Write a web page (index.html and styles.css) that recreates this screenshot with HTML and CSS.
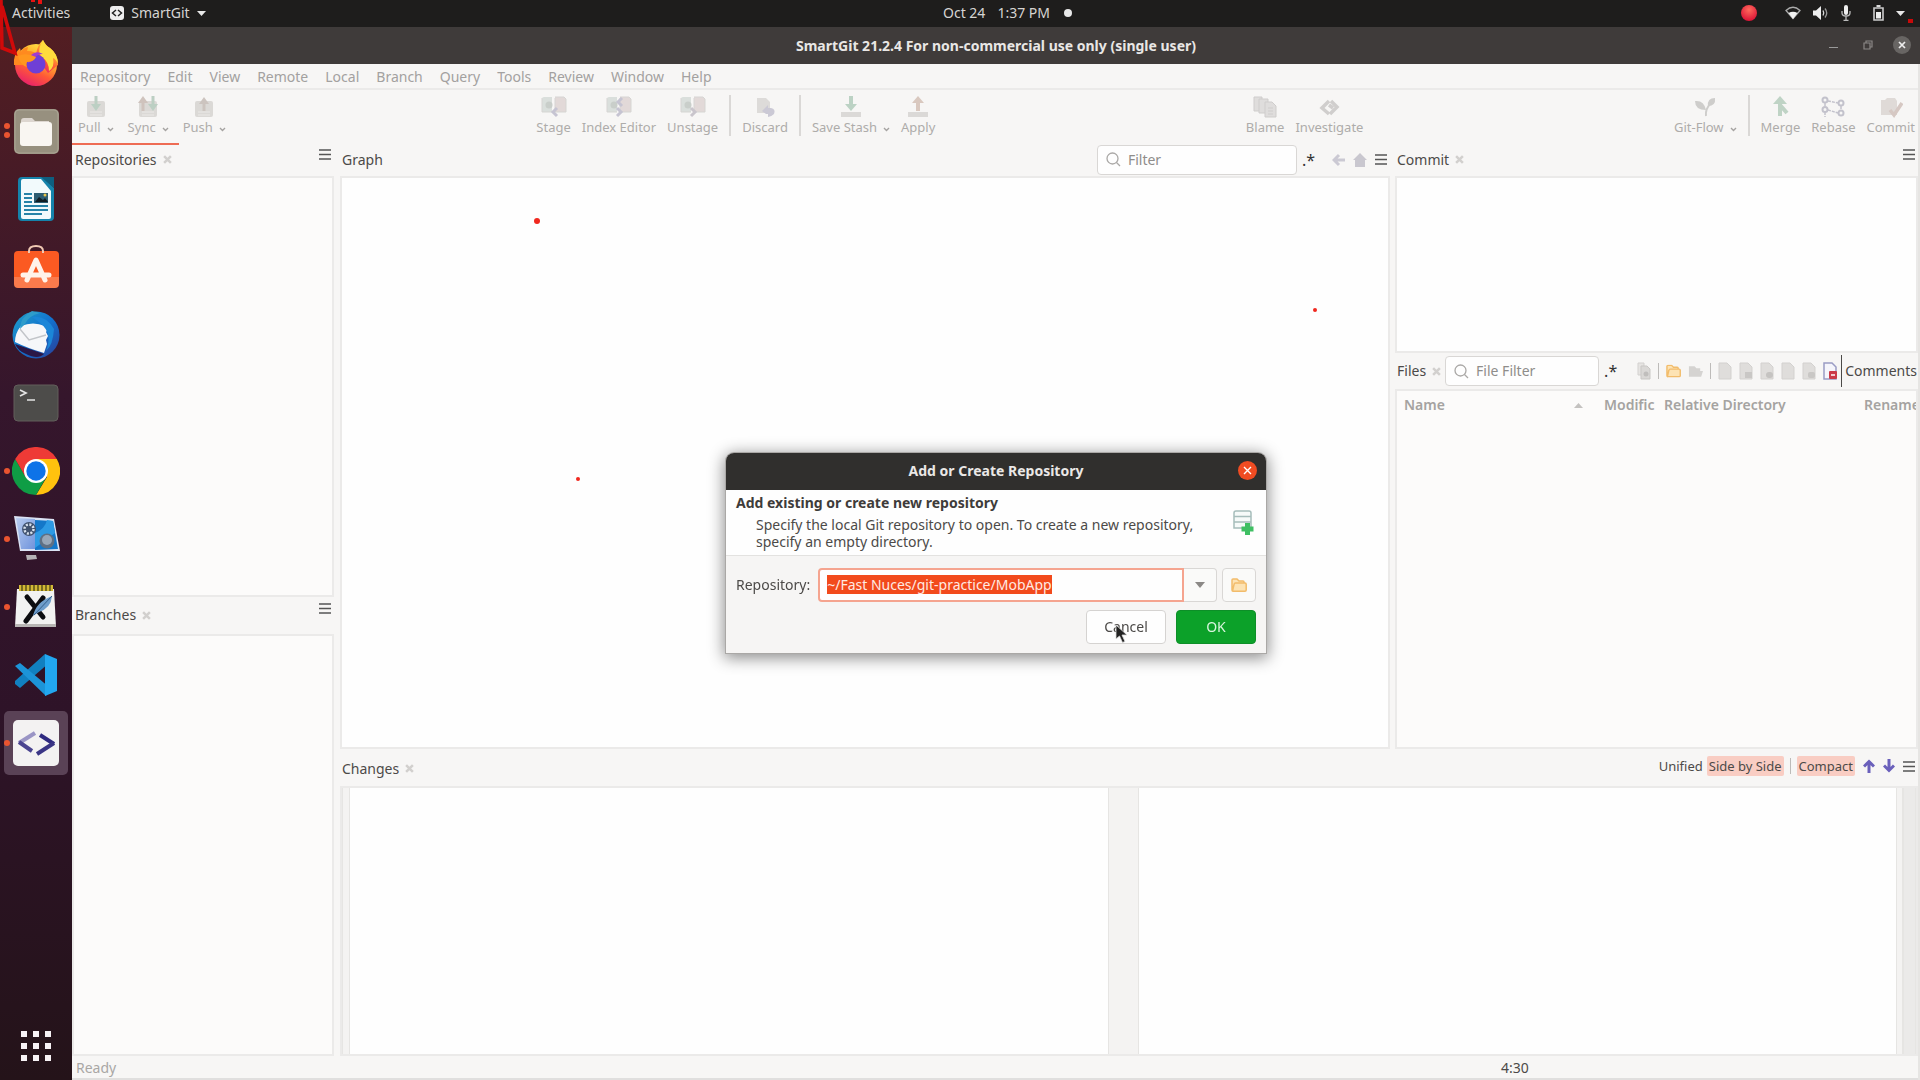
FILE: index.html
```html
<!DOCTYPE html>
<html lang="en">
<head>
<meta charset="utf-8">
<title>SmartGit</title>
<link rel="stylesheet" href="styles.css">
</head>
<body>
<svg class="defs" aria-hidden="true">
  <defs>
    <linearGradient id="ff" x1="0.8" y1="0" x2="0.3" y2="1"><stop offset="0" stop-color="#fff04a"/><stop offset=".35" stop-color="#ffb02e"/><stop offset=".65" stop-color="#ff5a36"/><stop offset="1" stop-color="#e81f6c"/></linearGradient>
    <linearGradient id="tb" x1="0" y1="0" x2="1" y2="1"><stop offset="0" stop-color="#1fa0c8"/><stop offset=".5" stop-color="#1272cf"/><stop offset="1" stop-color="#2c3b94"/></linearGradient>
    <linearGradient id="sw" x1="0" y1="0" x2="0" y2="1"><stop offset="0" stop-color="#fb5a22"/><stop offset=".7" stop-color="#fb5a22"/><stop offset=".71" stop-color="#fa7a4c"/><stop offset="1" stop-color="#fa7a4c"/></linearGradient>
    <linearGradient id="mon" x1="0" y1="0" x2="1" y2="1"><stop offset="0" stop-color="#b9cdf0"/><stop offset="1" stop-color="#6f93dc"/></linearGradient>
    <radialGradient id="rec" cx=".5" cy=".3" r=".7"><stop offset="0" stop-color="#ff6a5c"/><stop offset="1" stop-color="#dc1236"/></radialGradient>
    <symbol id="burger" viewBox="0 0 12 11"><path d="M0 1h12M0 5.5h12M0 10h12" stroke="#555" stroke-width="1.5"/></symbol>
    <symbol id="close" viewBox="0 0 8 8"><path d="M1 1l6 6M7 1L1 7" stroke="#d2d0ce" stroke-width="2.2"/></symbol>
    <symbol id="caret" viewBox="0 0 7 5"><path d="M1 1l2.500 2.500L6 1" fill="none" stroke="#a5a3a1" stroke-width="1.400"/></symbol>
    <symbol id="lens" viewBox="0 0 15 15"><circle cx="6.500" cy="6.500" r="5.500" fill="none" stroke="#aaa8a6" stroke-width="1.300"/><path d="M10.500 10.500L14 14" stroke="#aaa8a6" stroke-width="1.300"/></symbol>
    <symbol id="tray" viewBox="0 0 24 22"><path d="M3 7q0-2 2-2h14q2 0 2 2v12q0 2-2 2H5q-2 0-2-2z" fill="#dbd9d6"/><path d="M6 16h12M6 19h12" stroke="#ebe9e7"/></symbol>
    <symbol id="page" viewBox="0 0 14 18"><path d="M1 1h8l4 4v12H1z" fill="#dfdddb" stroke="#d3d1cf"/></symbol>
    <symbol id="folder" viewBox="0 0 16 14"><path d="M1 12V2q0-1 1-1h4l2 2h4q1 0 1 1v1M1.500 13L3 6.500q.3-1.500 1.500-1.500H14q1.200 0 1.200 1.200V12q0 1.200-1.200 1.200H2Q1 13.200 1 12z" fill="#fde3b4" stroke="#f2bc6b" stroke-width="1.500"/></symbol>
    <symbol id="pair" viewBox="0 0 26 22"><path d="M1 3q0-2 2-2h8v15H1z" fill="#dadfdc"/><path d="M14 1h9l2 2v13H14z" fill="#e2d9d8"/><path d="M1 2v14h10M14 2v14h11V3l-2-2h-9" fill="none" stroke="#d6d5d3"/><circle cx="8" cy="9" r="3.500" fill="#c9ceca"/></symbol>
  </defs>
</svg>

<header class="topbar">
  <div class="topbar-left">
    <button class="plain">Activities</button>
    <button class="plain app-menu"><svg width="14" height="14" viewBox="0 0 14 14"><rect width="14" height="14" rx="3" fill="#eee"/><path d="M6 4L2.500 7 6 10M8 4l3.500 3L8 10" fill="none" stroke="#222" stroke-width="1.500"/></svg>SmartGit<svg width="9" height="5" viewBox="0 0 9 5"><path d="M0 0h9L4.500 5z" fill="#e8e8e8"/></svg></button>
  </div>
  <button class="plain clock"><span>Oct 24</span><span>1:37 PM</span><i class="dot"></i></button>
  <div class="topbar-right">
    <svg class="rec" width="16" height="16"><circle cx="8" cy="8" r="8" fill="url(#rec)"/></svg>
    <svg width="16" height="14" viewBox="0 0 16 14"><path d="M1 4.500Q8-2 15 4.500L8 12.500z" fill="none" stroke="#aaa" stroke-width="1.300"/><path d="M3.500 7Q8 4.500 12.500 7L8 13z" fill="#f2f2f2"/></svg>
    <svg width="16" height="14" viewBox="0 0 16 14"><path d="M0 4.500h3L8 0v14L3 9.500H0z" fill="#eee"/><path d="M10 4.500q1.500 2.500 0 5" fill="none" stroke="#ddd" stroke-width="1.300"/><path d="M12 2.500q3.500 4.500 0 9" fill="none" stroke="#999" stroke-width="1.300"/></svg>
    <svg width="10" height="16" viewBox="0 0 10 16"><rect x="3" width="4" height="10" rx="2" fill="#eee"/><path d="M1 6v2q0 3 4 3t4-3V6M5 11v4M2.500 15.300h5" fill="none" stroke="#bbb" stroke-width="1.300"/></svg>
    <svg class="battery" width="11" height="16" viewBox="0 0 11 16"><path d="M1 3h9v12H1z" fill="none" stroke="#ccc" stroke-width="1.600"/><path d="M3.500 1h4" stroke="#ddd" stroke-width="2"/><path d="M3 7h5v6.500H3z" fill="#eee"/></svg>
    <svg width="9" height="5" viewBox="0 0 9 5"><path d="M0 0h9L4.500 5z" fill="#e8e8e8"/></svg>
  </div>
</header>

<div class="desktop">
  <nav class="dock" aria-label="Dock">
    <button class="dock-item" aria-label="Firefox"><svg viewBox="0 0 48 48"><circle cx="24" cy="26" r="21" fill="url(#ff)"/><path d="M24 16Q25 6 31 1q2 5 7 8 8 6 8 17L36 34 26 20z" fill="url(#ff)"/><path d="M31 1q2 5 7 8 8 6 8 16-2-5-5-6 2 9-4 13 0-9-7-14-6-5 1-17z" fill="#ffdc3d"/><path d="M2 26Q1 15 8 9l1 4q2-4 7-5l-1 4q9 0 10 5l-7 9z" fill="#ff8a1f"/><circle cx="24" cy="25" r="9.500" fill="#6f3fd6"/><path d="M16 20q6-10 15-5-7 0-8 5l-7 4z" fill="#a03bd0"/><path d="M6 17q8-4 18 1-2 5-9 5-2 2 0 5Q8 26 6 17z" fill="#ff971f"/></svg></button>
    <button class="dock-item two" aria-label="Files"><svg viewBox="0 0 48 48"><rect x="2" y="2" width="45" height="45" rx="5" fill="#97907f"/><rect x="3" y="3" width="43" height="43" rx="4" fill="none" stroke="#aaa494"/><path d="M9 14q0-3 3-3h8l3 3h14v8H9z" fill="#ddd6d0"/><rect x="8" y="15" width="32" height="24" rx="3" fill="#f9f6f2"/></svg></button>
    <button class="dock-item" aria-label="Writer"><svg viewBox="0 0 48 48"><path d="M10 2h21l11 11v29q0 4-4 4H10q-4 0-4-4V6q0-4 4-4z" fill="#1583ab"/><path d="M11 4h18l10 12v26q0 2-2 2H11q-2 0-2-2V6q0-2 2-2z" fill="#f2fafc"/><path d="M29 2h13v11z" fill="#0e5f80"/><path d="M12 19h8M12 23h8M12 27h8M12 31h24M12 35h24M12 39h18" stroke="#2683a8" stroke-width="2"/><path d="M22 18h14v10H22z" fill="#2d5d72"/><path d="M23 27l4-5 4 3 2-2 3 4z" fill="#111e24"/><circle cx="33" cy="20" r="1.500" fill="#e8c44a"/></svg></button>
    <button class="dock-item" aria-label="Software"><svg viewBox="0 0 48 48"><rect x="2" y="8" width="45" height="37" rx="4" fill="url(#sw)"/><path d="M17 10V8q0-5 7-5t7 5v2" fill="none" stroke="#f0c9b3" stroke-width="2"/><path d="M15 37l9-20 9 20M11 32h26" fill="none" stroke="#fff3ea" stroke-width="5" stroke-linejoin="round" stroke-linecap="round"/></svg></button>
    <button class="dock-item" aria-label="Thunderbird"><svg viewBox="0 0 48 48"><circle cx="24" cy="24" r="23.500" fill="url(#tb)"/><path d="M3 33l29 10Q26 49 14 43 6 40 3 33z" fill="#2b1746"/><path d="M9 15q12-5 24 0l3 3-2 3 2 4-2 4 1 4-3 9Q15 37 3 31q0-9 6-16z" fill="#f6f7f9"/><path d="M8 18l9 11 17-5" fill="none" stroke="#c2c5c9" stroke-width="1.500"/><path d="M8 18Q8 6 20 0l8 2Q16 5 13 13z" fill="#2e9ccb"/><path d="M20 6q14-2 22 12-1 16-8 22 7-18-6-28z" fill="#1b86d8"/></svg></button>
    <button class="dock-item" aria-label="Terminal"><svg viewBox="0 0 48 48"><rect x="2" y="6" width="44" height="36" rx="4" fill="#4d4c4a" stroke="#625e5b"/><path d="M8 11l6 3-6 3M15 21h8" fill="none" stroke="#e4e4e4" stroke-width="1.700"/></svg></button>
    <button class="dock-item one" aria-label="Chrome"><svg viewBox="0 0 48 48"><path d="M24 12h20.800A24 24 0 0 1 24 48l11-18z" fill="#ffc20e"/><path d="M3.200 12A24 24 0 0 0 24 48l10.400-18H24L13.600 30z" fill="#0f9d45"/><path d="M3.200 12A24 24 0 0 1 44.800 12H24L13.600 30z" fill="#ee3a36"/><circle cx="24" cy="24" r="12" fill="#fff"/><circle cx="24" cy="24" r="9.700" fill="#0d73e8"/></svg></button>
    <button class="dock-item one" aria-label="Screen recorder"><svg viewBox="0 0 48 48"><path d="M2 1l40 3 6 32H8z" fill="#dbe3f4"/><path d="M4 3l19 1v30H9z" fill="url(#mon)"/><path d="M23 5l18 1 5 28-23 1z" fill="#1477c9"/><path d="M23 18q10-4 12-13l6 1 2 12-20 15z" fill="#2d9ae4"/><circle cx="17" cy="14" r="7" fill="#41526e"/><circle cx="17" cy="14" r="4.500" fill="none" stroke="#d9e2ee" stroke-width="2.500" stroke-dasharray="2 1.500"/><circle cx="35" cy="26" r="7.500" fill="#5f7084"/><circle cx="35" cy="25" r="5" fill="#98a7b8"/><path d="M14 40h10l1 4-10 1z" fill="#b5b3b6"/></svg></button>
    <button class="dock-item one" aria-label="Xournal++"><svg viewBox="0 0 48 48"><path d="M5 6h37l2 38H3z" fill="#f2f2f1"/><path d="M3 41h41v3H3z" fill="#b8b6b4"/><path d="M7 2h34v6H7z" fill="#776c20"/><path d="M7 5h34" stroke="#d3b936" stroke-width="6" stroke-dasharray="2 2"/><path d="M15 14l16 20M31 15L14 38" stroke="#0c0d10" stroke-width="5" stroke-linecap="round"/><path d="M40 13q-1 12-13 16l-6 4Q24 19 40 13z" fill="#6f9ecb"/><path d="M40 13L22 32" stroke="#35608c"/></svg></button>
    <button class="dock-item" aria-label="Visual Studio Code"><svg viewBox="0 0 48 48"><path d="M33 3l4 9L8 37l-5-4v-3z" fill="#1180c0"/><path d="M3 15l5-3 29 24-3 9z" fill="#1c94d8"/><path d="M33 3l12 5v32l-12 5z" fill="#22a7f0"/></svg></button>
    <button class="dock-item one active" aria-label="SmartGit"><svg viewBox="0 0 48 48"><rect x="1" y="1" width="46" height="46" rx="5" fill="#f3f2f2"/><path d="M23 14L7 24" stroke="#9a95c5" stroke-width="4"/><path d="M7 23l13 9" stroke="#4a4490" stroke-width="4"/><path d="M28 16l14 9" stroke="#2f2a80" stroke-width="4"/><path d="M42 24L25 35" stroke="#3a3585" stroke-width="4"/></svg></button>
    <button class="dock-item apps" aria-label="Show Applications"><svg viewBox="0 0 48 48"><path d="M9 12h30M9 24h30M9 36h30" stroke="#f7f2f5" stroke-width="6" stroke-dasharray="6 6"/></svg></button>
  </nav>

  <main class="window">
    <div class="titlebar">
      <h1>SmartGit 21.2.4 For non-commercial use only (single user)</h1>
      <div class="win-buttons">
        <button class="plain" aria-label="Minimize"><svg width="9" height="8"><path d="M0 6.500h9" stroke="#999"/></svg></button>
        <button class="plain" aria-label="Restore"><svg width="10" height="10" viewBox="0 0 10 10"><path d="M1 3h6v6H1zM3 3V1h6v6H7" fill="none" stroke="#8a8785" stroke-width="1.200"/></svg></button>
        <button class="plain win-close" aria-label="Close"><svg width="8" height="8" viewBox="0 0 8 8"><path d="M1 1l6 6M7 1L1 7" stroke="#eee" stroke-width="1.700"/></svg></button>
      </div>
    </div>
    <nav class="menubar">
      <button class="plain">Repository</button><button class="plain">Edit</button><button class="plain">View</button><button class="plain">Remote</button><button class="plain">Local</button><button class="plain">Branch</button><button class="plain">Query</button><button class="plain">Tools</button><button class="plain">Review</button><button class="plain">Window</button><button class="plain">Help</button>
    </nav>
    <div class="toolbar">
      <div class="tools first">
        <button class="tool drop"><svg class="ti" viewBox="0 0 24 22"><use href="#tray"/><path d="M12 0v9" stroke="#bccfc3" stroke-width="3"/><path d="M7 8h10l-5 7z" fill="#bccfc3"/></svg><span>Pull<svg class="caret"><use href="#caret"/></svg></span></button>
        <button class="tool drop"><svg class="ti" viewBox="0 0 24 22"><use href="#tray"/><path d="M7 15V5" stroke="#cfc3bd" stroke-width="3"/><path d="M2 7h10L7 0z" fill="#cfc3bd"/><path d="M17 0v9" stroke="#bccfc3" stroke-width="3"/><path d="M12 8h10l-5 7z" fill="#bccfc3"/></svg><span>Sync<svg class="caret"><use href="#caret"/></svg></span></button>
        <button class="tool drop"><svg class="ti" viewBox="0 0 24 22"><use href="#tray"/><path d="M12 15V6" stroke="#ccc4bf" stroke-width="3"/><path d="M7 8h10l-5-7z" fill="#ccc4bf"/></svg><span>Push<svg class="caret"><use href="#caret"/></svg></span></button>
      </div>
      <div class="tools">
        <button class="tool"><svg class="ti wide" viewBox="0 0 26 22"><use href="#pair"/><path d="M16 12l-4 4 4 4" fill="none" stroke="#c6c4d2" stroke-width="3"/></svg>Stage</button>
        <button class="tool"><svg class="ti wide" viewBox="0 0 26 22"><use href="#pair"/><path d="M16 2l-4 4 4 4M11 12l4 4-4 4" fill="none" stroke="#c6c4d2" stroke-width="3"/></svg>Index Editor</button>
        <button class="tool"><svg class="ti wide" viewBox="0 0 26 22"><use href="#pair"/><path d="M11 12l4 4-4 4" fill="none" stroke="#c9c5cc" stroke-width="3"/></svg>Unstage</button>
        <i class="sep"></i>
        <button class="tool"><svg class="ti" viewBox="0 0 24 22"><path d="M4 2h9l4 4v11H4z" fill="#dddbd9"/><path d="M9 15l6-6v3h3q5 1 3 6-3 3-6 3v-3h-2z" fill="#cbc9d5"/></svg>Discard</button>
        <i class="sep"></i>
        <button class="tool drop"><svg class="ti" viewBox="0 0 24 22"><path d="M12 0v8" stroke="#bcd2c4" stroke-width="4"/><path d="M6 8h12l-6 7z" fill="#bcd2c4"/><path d="M2 18.500h20" stroke="#dbd9d7" stroke-width="5"/></svg><span>Save Stash<svg class="caret"><use href="#caret"/></svg></span></button>
        <button class="tool"><svg class="ti" viewBox="0 0 24 22"><path d="M12 15V6" stroke="#d9c8bf" stroke-width="4"/><path d="M6 7h12l-6-7z" fill="#d9c8bf"/><path d="M2 18.500h20" stroke="#dbd9d7" stroke-width="5"/></svg>Apply</button>
      </div>
      <div class="tools">
        <button class="tool"><svg class="ti" viewBox="0 0 24 22"><g fill="#dfdddc" stroke="#cfcdcc"><path d="M1 1h8v14H1z"/><path d="M6 3h9v14H6z"/><path d="M12 6h7l4 4v11H12z"/></g><path d="M15 12h5M15 15h5M15 18h5" stroke="#cfcdcc"/></svg>Blame</button>
        <button class="tool"><svg class="ti" viewBox="0 0 24 22"><path d="M12 5l-7 7 7 6M14 5l6 6-7 7M12 9l4 3" fill="none" stroke="#d0cecd" stroke-width="3.500"/></svg>Investigate</button>
      </div>
      <div class="tools">
        <button class="tool drop"><svg class="ti" viewBox="0 0 24 22"><path d="M2 5q9-1 11 9Q2 14 2 5zM22 2q-8 0-7 8 8 0 7-8z" fill="#cecdcb"/><path d="M13 20q-1-7 5-13" fill="none" stroke="#cecdcb" stroke-width="2"/></svg><span>Git-Flow<svg class="caret"><use href="#caret"/></svg></span></button>
        <i class="sep"></i>
        <button class="tool"><svg class="ti" viewBox="0 0 24 22"><path d="M12 20V7M12 9l7 8" stroke="#bfd3c5" stroke-width="4"/><path d="M5 8h14l-7-8z" fill="#bfd3c5"/></svg>Merge</button>
        <button class="tool"><svg class="ti" viewBox="0 0 24 22"><path d="M4 7v4M4 16v5M20 10v4M7 5l10 2M7 14l10 3" stroke="#c3c2cc" stroke-width="1.500" stroke-dasharray="3 1"/><g fill="none" stroke="#c3c2cc" stroke-width="2"><circle cx="4" cy="4" r="2.500"/><circle cx="4" cy="13.500" r="2.500"/><circle cx="20" cy="7" r="2.500"/><circle cx="20" cy="17" r="2.500"/></g></svg>Rebase</button>
        <button class="tool"><svg class="ti" viewBox="0 0 24 22"><path d="M2 4h4l2-2h8l2 3v14H2z" fill="#dfdad7"/><path d="M11 14l4 5 8-12" fill="none" stroke="#d6c8c3" stroke-width="3.500"/></svg>Commit</button>
      </div>
    </div>

    <div class="workspace">
      <div class="side">
        <section class="view repositories">
          <header class="head focus"><h2>Repositories</h2><button class="plain" aria-label="Close Repositories"><svg class="x"><use href="#close"/></svg></button><button class="plain menu raised" aria-label="Repositories menu"><svg class="burger"><use href="#burger"/></svg></button></header>
          <div class="pane"></div>
        </section>
        <section class="view branches">
          <header class="head tall"><h2>Branches</h2><button class="plain" aria-label="Close Branches"><svg class="x"><use href="#close"/></svg></button><button class="plain menu raised" aria-label="Branches menu"><svg class="burger"><use href="#burger"/></svg></button></header>
          <div class="pane"></div>
        </section>
      </div>
      <div class="center">
        <div class="upper">
          <section class="view">
            <header class="head"><h2>Graph</h2>
              <label class="search"><svg class="lens"><use href="#lens"/></svg><input type="text" placeholder="Filter" aria-label="Filter"></label>
              <button class="plain regex" aria-label="Regular expression">.*</button>
              <button class="plain back" aria-label="Back"><svg width="14" height="14" viewBox="0 0 14 14"><path d="M7 2L2 7l5 5M2 7h11" fill="none" stroke="#cbc9d3" stroke-width="3"/></svg></button>
              <button class="plain home" aria-label="Home"><svg width="14" height="14" viewBox="0 0 14 14"><path d="M7 0l7 7h-2v7H2V7H0z" fill="#c9c7cf"/></svg></button>
              <button class="plain" aria-label="Graph menu"><svg class="burger"><use href="#burger"/></svg></button>
            </header>
            <div class="pane white"></div>
          </section>
          <div class="right">
            <section class="view commit">
              <header class="head"><h2>Commit</h2><button class="plain" aria-label="Close Commit"><svg class="x"><use href="#close"/></svg></button><button class="plain menu raised" aria-label="Commit menu"><svg class="burger"><use href="#burger"/></svg></button></header>
              <div class="pane white"></div>
            </section>
            <section class="view files">
              <header class="head tall"><h2>Files</h2><button class="plain" aria-label="Close Files"><svg class="x"><use href="#close"/></svg></button>
                <label class="search file"><svg class="lens"><use href="#lens"/></svg><input type="text" placeholder="File Filter" aria-label="File Filter"></label>
                <button class="plain regex" aria-label="Regular expression">.*</button>
                <div class="file-tools">
                  <svg class="fi" viewBox="0 0 14 18"><path d="M1 1h6v12H1z" fill="#e6e4e2" stroke="#d3d1cf"/><path d="M4 4h6l3 3v10H4z" fill="#dad8d6" stroke="#c9c7c5"/><circle cx="9" cy="12" r="2.500" fill="#c0bebc"/></svg>
                  <i class="thin"></i>
                  <svg class="fo" viewBox="0 0 16 14"><use href="#folder"/></svg>
                  <svg class="fo" viewBox="0 0 16 14"><path d="M1 13V2h6l2 2h4v3h3l-2 6z" fill="#d5d3d1"/></svg>
                  <i class="thin"></i>
                  <svg class="fi" viewBox="0 0 14 18"><use href="#page"/></svg>
                  <svg class="fi" viewBox="0 0 14 18"><use href="#page"/><rect x="6" y="10" width="7" height="6" fill="#c9c7c5"/></svg>
                  <svg class="fi" viewBox="0 0 14 18"><use href="#page"/><rect x="6" y="10" width="7" height="6" rx="3" fill="#c5c3c1"/></svg>
                  <svg class="fi" viewBox="0 0 14 18"><use href="#page"/></svg>
                  <svg class="fi" viewBox="0 0 14 18"><use href="#page"/><rect x="6" y="10" width="7" height="6" rx="2" fill="#c9c7c5"/></svg>
                  <svg class="fi" viewBox="0 0 14 18"><path d="M1 1h8l4 4v12H1z" fill="#f5f5fb" stroke="#9a9cc4" stroke-width="1.500"/><rect x="6" y="9" width="8" height="8" rx="1" fill="#cc3a48"/><path d="M8 13h4" stroke="#fff" stroke-width="1.500"/></svg>
                </div>
                <h2 class="comments">Comments</h2>
              </header>
              <div class="pane">
                <table class="file-table"><thead><tr><th class="c-name"><span>Name<svg width="9" height="5"><path d="M0 5h9L4.500 0z" fill="#c4c2c0"/></svg></span></th><th class="c-mod">Modific</th><th class="c-dir">Relative Directory</th><th>Rename</th></tr></thead></table>
              </div>
            </section>
          </div>
        </div>
        <section class="view lower">
          <header class="head tall"><h2>Changes</h2><button class="plain" aria-label="Close Changes"><svg class="x"><use href="#close"/></svg></button>
            <div class="diff-modes">
              <button class="plain">Unified</button><button class="plain on">Side by Side</button><i class="thin"></i><button class="plain on">Compact</button>
              <button class="plain arrow" aria-label="Previous change"><svg width="12" height="14" viewBox="0 0 12 14"><path d="M6 14V3M1 7.500l5-5 5 5" fill="none" stroke="#6a60bb" stroke-width="3"/></svg></button>
              <button class="plain arrow" aria-label="Next change"><svg width="12" height="14" viewBox="0 0 12 14"><path d="M6 0v11M1 6.500l5 5 5-5" fill="none" stroke="#6a60bb" stroke-width="3"/></svg></button>
              <button class="plain arrow" aria-label="Changes menu"><svg class="burger"><use href="#burger"/></svg></button>
            </div>
          </header>
          <div class="pane diff"><i></i><div class="code"></div><i></i><div class="code"></div><i></i><i class="scroll"></i></div>
        </section>
      </div>
    </div>
    <footer class="status"><span class="ready">Ready</span><span>4:30</span></footer>
  </main>
</div>

<div class="modal">
  <form class="dialog" role="dialog" aria-labelledby="dlg-title">
    <header class="dialog-title"><h2 id="dlg-title">Add or Create Repository</h2><button type="button" class="plain dialog-close" aria-label="Close"><svg width="9" height="9" viewBox="0 0 9 9"><path d="M1 1l7 7M8 1L1 8" stroke="#fff" stroke-width="1.400"/></svg></button></header>
    <div class="intro">
      <div class="intro-text"><h3>Add existing or create new repository</h3><p>Specify the local Git repository to open. To create a new repository, specify an empty directory.</p></div>
      <svg class="intro-icon" width="21" height="26" viewBox="0 0 21 26"><path d="M1 3q0-2 2-2h13q2 0 2 2v15H1z" fill="#f6faf9" stroke="#a6bdbb" stroke-width="1.500"/><path d="M1 6.500h17M1 12h17" stroke="#a6bdbb" stroke-width="1.700"/><path d="M14.500 13v12M8.500 19h12" stroke="#3fbf63" stroke-width="5"/></svg>
    </div>
    <div class="field">
      <label for="repo">Repository:</label>
      <div class="combo"><input id="repo" type="text" value="~/Fast Nuces/git-practice/MobApp" spellcheck="false"><button type="button" aria-label="Show history"><svg width="10" height="6"><path d="M0 0h10L5 6z" fill="#8b8987"/></svg></button></div>
      <button type="button" class="browse" aria-label="Browse"><svg width="16" height="14"><use href="#folder"/></svg></button>
    </div>
    <div class="actions"><button type="button">Cancel</button><button type="button" class="ok">OK</button></div>
    <svg class="pointer" width="13" height="20" viewBox="0 0 13 20"><path d="M1 1v14l3.500-3 3 6.500 2.500-1-3-6.500h5z" fill="#222" stroke="#ddd" stroke-width=".8"/></svg>
  </form>
</div>

<svg class="ink scribble" width="50" height="58" aria-hidden="true"><path d="M1 0L2 48l13 5L2 6" fill="none" stroke="#d00a0a" stroke-width="3.500"/><path d="M31 0h4v2h-4zM38 0h4v4h-4z" fill="#e81212"/></svg>
<i class="ink mark m1"></i><i class="ink mark m2"></i><i class="ink mark m3"></i><i class="ink mark m4"></i>
<script>
  const repo = document.getElementById('repo');
  repo.focus();
  repo.select();
</script>
</body>
</html>
```
FILE: styles.css
```css
* { box-sizing: border-box; }
body {
  margin: 0; min-height: 100vh; display: flex; flex-direction: column;
  font: 14px/18px "Noto Sans", "Open Sans", sans-serif; color: #4c4a48; background: #f7f6f5;
}
h1, h2, h3, p { margin: 0; font-size: inherit; font-weight: inherit; }
button, input { font: inherit; color: inherit; }
svg { display: block; flex: none; }
i { display: block; }
.defs { position: absolute; width: 0; height: 0; }
.plain { padding: 0; border: 0; background: none; white-space: nowrap; }

/* desktop bar */
.topbar { display: grid; grid-template-columns: 1fr auto 1fr; align-items: center; height: 27px; padding: 0 15px 1px 12px; background: #1e1d1c; color: #d6d4d2; }
.topbar-left, .topbar-right, .app-menu, .clock { display: flex; align-items: center; }
.topbar-left { gap: 40px; }
.app-menu { gap: 7px; }
.clock { gap: 12px; margin-left: 98px; }
.dot { width: 8px; height: 8px; margin-left: 2px; border-radius: 50%; background: #e8e8e8; }
.topbar-right { justify-content: flex-end; gap: 12px; }
.rec { margin-right: 16px; }
.battery { margin-left: 10px; }

/* dock */
.desktop { flex: 1; display: flex; }
.dock { width: 72px; flex: none; display: flex; flex-direction: column; align-items: center; gap: 4px; padding: 4px 4px 2px; background: linear-gradient(#531e22, #35162c 35%, #2e1328 65%, #241319); }
.dock-item { position: relative; width: 64px; height: 64px; padding: 8px; border: 0; border-radius: 5px; background: none; }
.dock-item.active { background: #5a4256; }
.dock-item.apps { margin-top: auto; }
.one::before, .two::before, .two::after { content: ""; position: absolute; left: 0; top: 29px; width: 6px; height: 6px; border-radius: 50%; background: #ea5430; }
.two::before { top: 24px; }
.two::after { top: 33px; }

/* application window */
.window { flex: 1; min-width: 0; display: flex; flex-direction: column; border-right: 2px solid #e6e5e3; }
.titlebar { position: relative; display: flex; align-items: center; justify-content: center; height: 37px; margin-right: -2px; background: #3f3b3a; color: #e9e7e5; font-weight: bold; }
.win-buttons { position: absolute; right: 9px; top: 9px; display: flex; align-items: center; gap: 25px; }
.win-close { display: grid; place-items: center; width: 18px; height: 18px; margin-left: -5px; border-radius: 50%; background: #686563; }
.menubar { display: flex; gap: 17px; height: 26px; padding: 1px 8px 0; border-bottom: 2px solid #ebeae9; color: #a3a1a0; }
.toolbar { display: flex; justify-content: space-between; height: 53px; padding: 5px 3px 0 6px; color: #aeacaa; font-size: 13px; }
.tools { display: flex; gap: 11px; }
.tools.first { gap: 14px; }
.tool { display: flex; flex-direction: column; align-items: center; gap: 1px; height: 41px; padding: 1px 0 0; border: 0; background: none; white-space: nowrap; line-height: 16px; }
.tool span { display: flex; align-items: center; gap: 6px; }
.ti { width: 24px; height: 22px; }
.ti.wide { width: 26px; }
.caret { width: 7px; height: 5px; margin-top: 4px; }
.sep { width: 2px; height: 41px; background: #dad8d6; }

.workspace { flex: 1; display: grid; grid-template-columns: minmax(0, 262fr) minmax(0, 1578fr); gap: 6px; }
.side, .center, .right, .view { display: flex; flex-direction: column; min-width: 0; }
.repositories { flex: 453 1 0; }
.branches { flex: 459 1 0; }
.upper { flex: 606 1 0; display: grid; grid-template-columns: minmax(0, 1050fr) minmax(0, 523fr); gap: 5px; }
.lower { flex: 307 1 0; }
.commit { flex: 210 1 0; }
.files { flex: 396 1 0; }
.pane { flex: 1; border: 2px solid #ebeae9; background: #fcfbfa; overflow: hidden; }
.white { background: #fefefe; }
.head { position: relative; display: flex; align-items: center; height: 33px; padding: 0 3px 0 2px; }
.head.tall { height: 37px; }
.side .head { padding-left: 3px; }
.files .head.tall { height: 36px; padding-right: 1px; }
.head h2 { margin-right: 6px; }
.head.focus::before { content: ""; position: absolute; left: 0; top: 0; width: 107px; height: 2px; background: #ee6c54; }
.x { width: 9px; height: 9px; }
.burger { width: 12px; height: 11px; }
.menu { margin-left: auto; }
.raised { align-self: flex-start; padding-top: 6px; }
.search { display: flex; align-items: center; gap: 7px; width: 200px; height: 30px; margin-left: auto; padding: 0 8px; border: 1px solid #d9d7d5; border-radius: 4px; background: #fefefe; }
.search.file { width: 154px; margin-left: 4px; }
.search input { flex: 1; min-width: 0; padding: 0; border: 0; outline: 0; background: none; }
.search input::placeholder { color: #8f8d8b; opacity: 1; }
.lens { width: 15px; height: 15px; }
.regex { margin-left: 5px; font-size: 16px; color: #333; }
.back { margin: 0 7px 0 17px; }
.home { margin-right: 8px; }
.file-tools { display: flex; align-items: center; gap: 7px; margin-left: auto; }
.fi { width: 14px; height: 18px; }
.fo { width: 15px; height: 14px; }
.thin { width: 1px; height: 16px; background: #bdbbb9; }
.head .comments { margin: 0 0 0 4px; padding: 7px 0 7px 3px; border-left: 1px solid #4c4a48; }

.file-table { width: 100%; table-layout: fixed; border-collapse: collapse; color: #a5a3a1; }
.file-table th { padding: 5px 0 6px 7px; text-align: left; font-weight: 600; white-space: nowrap; overflow: hidden; }
.file-table .c-name { width: 200px; }
.file-table .c-mod { width: 60px; }
.file-table .c-dir { width: 200px; }
.c-name span { display: flex; align-items: center; justify-content: space-between; padding-right: 14px; }

.diff-modes { align-self: flex-start; display: flex; align-items: center; gap: 4px; height: 20px; margin: 5px 0 0 auto; font-size: 13px; }
.diff-modes .on { height: 20px; padding: 0 2px; border-radius: 2px; background: #f9cdc3; }
.diff-modes .thin { margin: 0 2px; }
.arrow { margin-left: 4px; }
.diff { display: grid; grid-template-columns: 8px 1fr 31px 1fr 7px 13px; }
.diff i { border: solid #e6e5e3; border-width: 0 1px; background: #f4f3f2; }
.diff .scroll { background: #ebeae9; }
.code { background: #fefefe; }
.lower .head { padding-top: 2px; }
.status { display: grid; grid-template-columns: 1428fr 418fr; align-items: center; height: 24px; padding: 2px 0 0 4px; border-bottom: 2px solid #e0dfde; }
.ready { color: #a9a7a5; }

/* dialog */
.modal { position: fixed; inset: 27px 0 2px 72px; display: grid; place-items: center; }
.dialog { position: relative; width: 540px; border-radius: 8px 8px 0 0; background: #f6f5f4; box-shadow: 0 0 0 1px #aaa8a6, 0 3px 16px 2px rgba(0, 0, 0, .45); }
.dialog-title { position: relative; display: flex; align-items: center; justify-content: center; height: 37px; border-radius: 8px 8px 0 0; background: #302f2d; color: #eae8e6; font-weight: bold; }
.dialog-close { position: absolute; right: 9px; top: 8px; display: grid; place-items: center; width: 19px; height: 19px; border-radius: 50%; background: #f04c22; }
.intro { display: flex; justify-content: space-between; padding: 4px 12px 5px 10px; border-bottom: 1px solid #e3e2e0; background: #fefefe; }
.intro h3 { margin-bottom: 4px; font-weight: bold; color: #3e3c3a; }
.intro p { width: 460px; padding-left: 20px; line-height: 17px; }
.intro-icon { margin-top: 16px; }
.field { display: flex; align-items: center; gap: 5px; padding: 12px 10px 8px 10px; }
.field label { margin-right: 3px; }
.combo { flex: 1; display: flex; min-width: 0; }
.combo input { flex: 1; min-width: 0; height: 34px; padding: 0 7px; border: 2px solid #f5a48f; border-radius: 4px 0 0 4px; outline: 0; background: #fefefe; }
.combo input::selection { background: #f24a1c; color: #ffe9e2; }
.combo button, .browse { display: grid; place-items: center; width: 34px; height: 34px; padding: 0; border: 1px solid #d9d7d5; border-radius: 4px; background: #fafaf9; }
.combo button { width: 33px; border-left: 0; border-radius: 0 4px 4px 0; }
.actions { display: flex; justify-content: flex-end; gap: 10px; padding: 0 10px 9px; }
.actions button { width: 80px; height: 34px; padding: 0; border: 1px solid #d5d3d1; border-radius: 4px; background: #fefefe; }
.actions .ok { border-color: #0d8f28; background: #0ca129; color: #d9f5de; }
.pointer { position: absolute; left: 389px; bottom: 9px; }

/* screen annotations */
.ink { position: absolute; pointer-events: none; }
.scribble { left: 0; top: 0; }
.mark { border-radius: 50%; background: #f0281e; }
.m1 { left: 534px; top: 218px; width: 6px; height: 6px; }
.m2 { left: 1313px; top: 308px; width: 4px; height: 4px; }
.m3 { left: 576px; top: 477px; width: 4px; height: 4px; }
.m4 { right: 7px; top: 19px; width: 5px; height: 4px; border-radius: 0; background: #c80a0a; }
```
